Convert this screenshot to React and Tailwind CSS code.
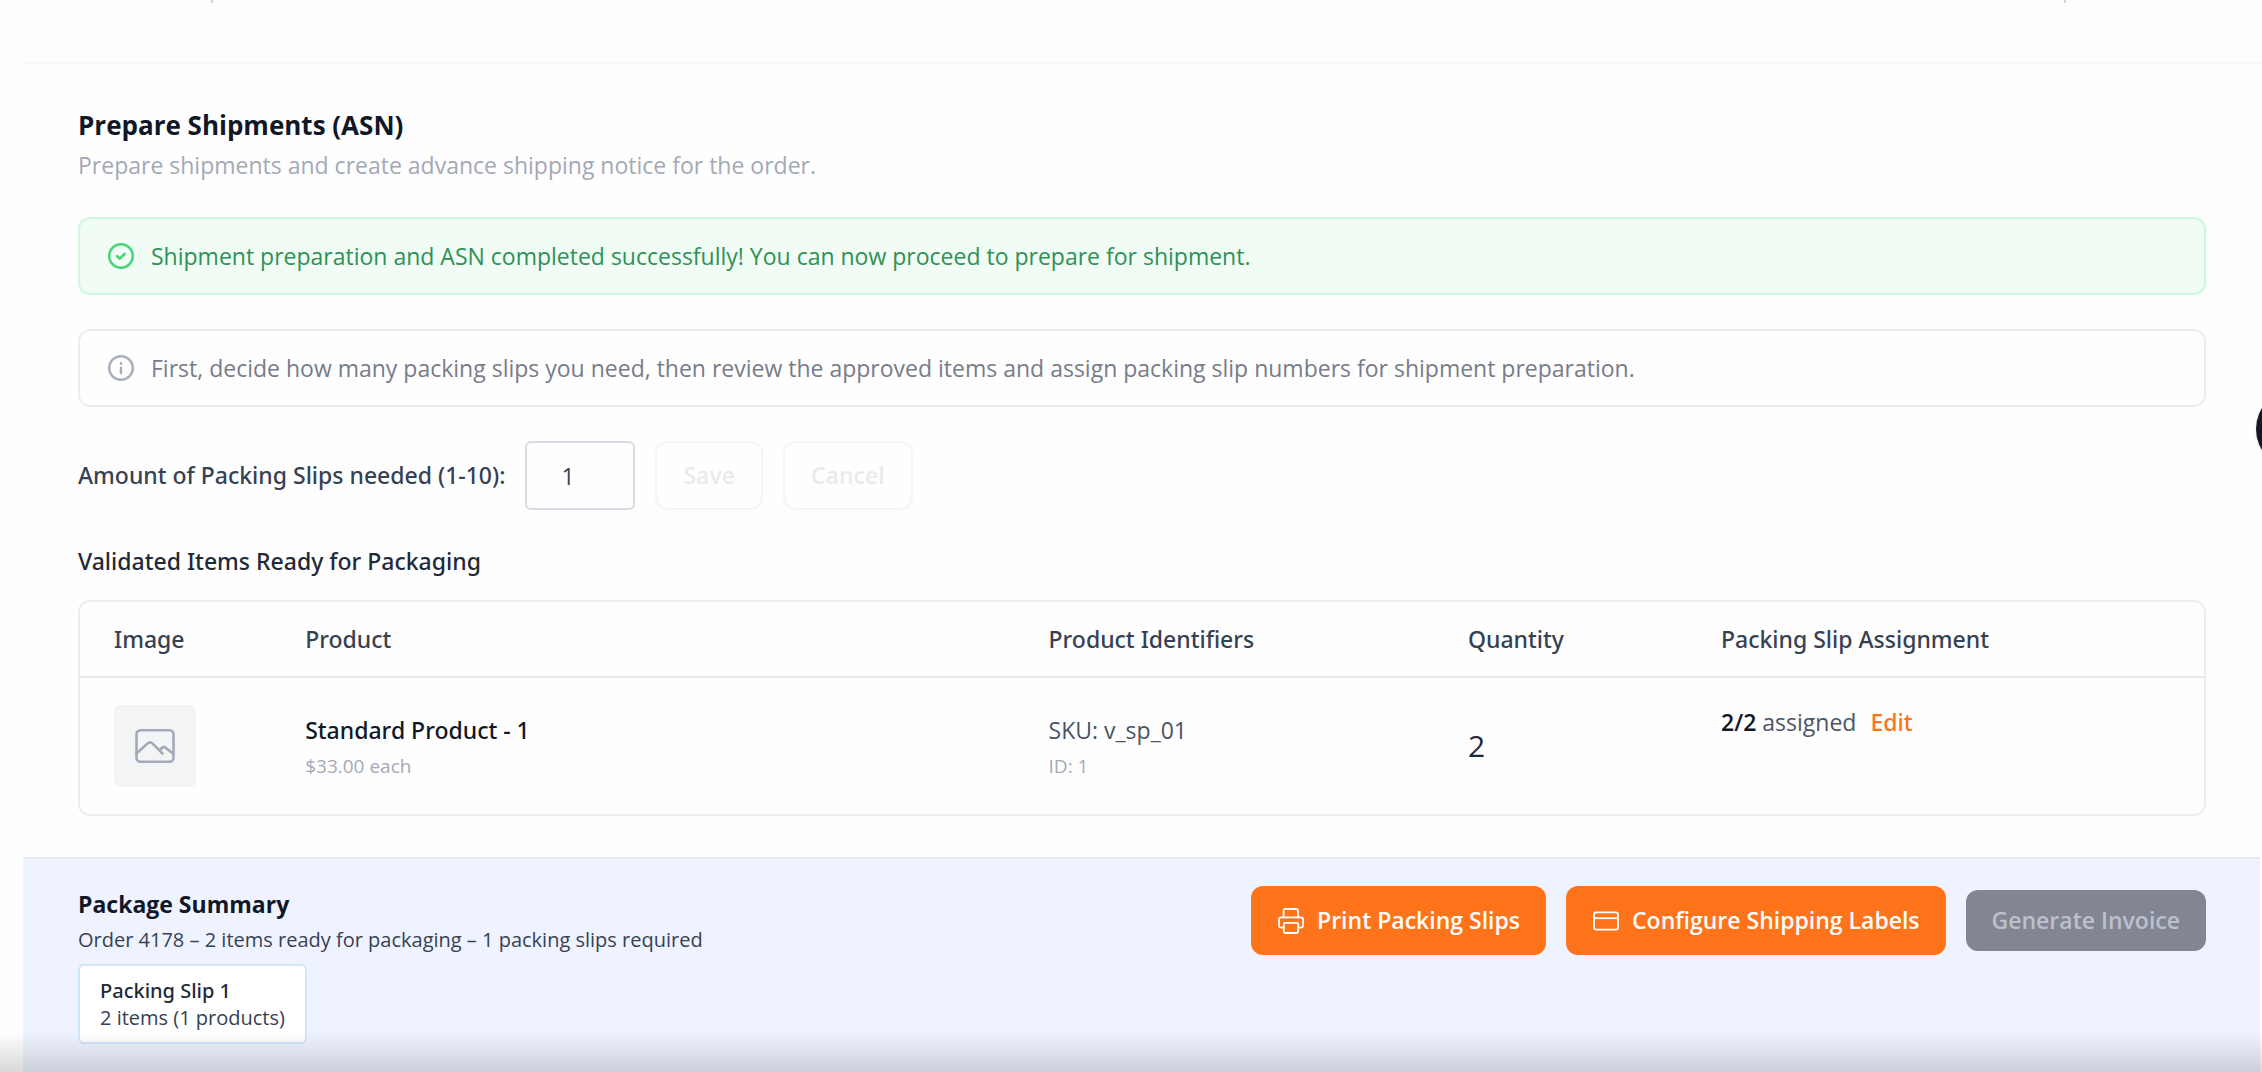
import React, { useState } from "react";

const items = [
  {
    id: 1,
    name: "Standard Product - 1",
    price: "$33.00 each",
    sku: "v_sp_01",
    quantity: 2,
    assigned: 2,
  },
];

const CheckCircleIcon = () => (
  <svg className="w-7 h-7 shrink-0 text-[#41d673]" viewBox="0 0 28 28" fill="none" stroke="currentColor" strokeWidth="2.4" aria-hidden="true">
    <circle cx="14" cy="14" r="11.8" />
    <path d="M10.2 14.2l2.6 2.4 4.8-4.8" strokeWidth="2.6" strokeLinecap="round" strokeLinejoin="round" />
  </svg>
);

const InfoCircleIcon = () => (
  <svg className="w-7 h-7 shrink-0 text-[#a9aebb]" viewBox="0 0 28 28" fill="none" stroke="currentColor" strokeWidth="2.4" aria-hidden="true">
    <circle cx="14" cy="14" r="11.8" />
    <path d="M14 13.6v5.4M14 9.2v.6" strokeWidth="2.4" strokeLinecap="round" />
  </svg>
);

const ImageIcon = () => (
  <svg className="w-10 h-9 text-[#a3a9b8]" viewBox="0 0 40 36" fill="none" stroke="currentColor" strokeWidth="2.6" strokeLinecap="round" strokeLinejoin="round" aria-hidden="true">
    <rect x="1.5" y="2.2" width="37" height="31.6" rx="4" />
    <path d="M2 25L12.6 15.4a3.5 3.5 0 0 1 4.8 0L27.5 25.5M24.8 22.4l1.8-2.2a3.5 3.5 0 0 1 4.6 0l6.8 5.4" />
  </svg>
);

const PrinterIcon = () => (
  <svg className="w-7 h-7" viewBox="0 0 28 28" fill="none" stroke="currentColor" strokeWidth="1.8" strokeLinecap="round" strokeLinejoin="round" aria-hidden="true">
    <path d="M6.6 10.4V3.4a1.4 1.4 0 0 1 1.4-1.4h11.6a1.4 1.4 0 0 1 1.4 1.4v7" />
    <path d="M6.8 20.6H4.4a2.4 2.4 0 0 1-2.4-2.4v-5.4a2.4 2.4 0 0 1 2.4-2.4h19.2a2.4 2.4 0 0 1 2.4 2.4v5.4a2.4 2.4 0 0 1-2.4 2.4h-2.4" />
    <rect x="6.8" y="15.8" width="14.4" height="10.2" rx="1.4" />
  </svg>
);

const CardIcon = () => (
  <svg className="w-7 h-7" viewBox="0 0 28 28" fill="none" stroke="currentColor" strokeWidth="1.8" strokeLinejoin="round" aria-hidden="true">
    <rect x="2" y="5.4" width="24" height="17.2" rx="2.4" />
    <path d="M2 11.2h24" />
  </svg>
);

const Notice = ({ icon, className, children }) => (
  <div className={`flex items-center gap-4 h-[78px] px-[27px] border-2 rounded-xl text-[23px] ${className}`}>
    {icon}
    <p>{children}</p>
  </div>
);

const SlipAmount = () => {
  const [amount, setAmount] = useState("1");

  return (
    <div className="flex items-center gap-5 mt-[34px]">
      <label htmlFor="slip-amount" className="font-['Noto_Sans',sans-serif] text-[23px] font-medium text-gray-700">
        Amount of Packing Slips needed (1-10):
      </label>
      <input
        id="slip-amount"
        type="text"
        inputMode="numeric"
        className="w-[110px] h-[69px] px-[34px] border-2 border-[#d8dbe3] rounded-md text-[23px] text-gray-700"
        value={amount}
        onChange={(e) => setAmount(e.target.value)}
      />
      <button type="button" disabled className="h-[69px] px-[26px] border-2 border-[#f5f5f6] rounded-xl text-[23px] font-semibold text-[#e9eaed]">
        Save
      </button>
      <button type="button" disabled className="h-[69px] px-[26px] border-2 border-[#f5f5f6] rounded-xl text-[23px] font-semibold text-[#e9eaed]">
        Cancel
      </button>
    </div>
  );
};

const ItemsTable = () => (
  <div className="mt-[19px] border-2 border-[#ededf0] rounded-xl overflow-hidden">
    <table className="w-full table-fixed text-left text-[23px]">
      <thead className="font-['Noto_Sans',sans-serif]">
        <tr className="h-[75px] border-b-2 border-[#e8e9ee] text-gray-700">
          <th className="w-[9%] px-[34px] font-medium">Image</th>
          <th className="w-[35%] px-[34px] font-medium">Product</th>
          <th className="px-[34px] font-medium">Product Identifiers</th>
          <th className="w-[253px] px-[34px] font-medium">Quantity</th>
          <th className="w-[517px] px-[34px] font-medium">Packing Slip Assignment</th>
        </tr>
      </thead>
      <tbody>
        {items.map((item) => (
          <tr key={item.id} className="h-[137px]">
            <td className="px-[34px]">
              <div className="flex items-center justify-center w-[82px] h-[82px] rounded-md bg-gray-100">
                <ImageIcon />
              </div>
            </td>
            <td className="px-[34px] pt-[3px]">
              <p className="font-['Noto_Sans',sans-serif] leading-9 font-medium text-gray-900">{item.name}</p>
              <p className="text-[19px] leading-9 text-[#a4a9b6]">{item.price}</p>
            </td>
            <td className="px-[34px] pt-[3px]">
              <p className="leading-9 text-gray-600">SKU: {item.sku}</p>
              <p className="text-[19px] leading-9 text-[#a4a9b6]">ID: {item.id}</p>
            </td>
            <td className="px-[34px] text-3xl text-gray-800">{item.quantity}</td>
            <td className="px-[34px] pt-[27px] align-top text-gray-600">
              <span className="font-semibold text-gray-900">
                {item.assigned}/{item.quantity}
              </span>{" "}
              assigned
              <button type="button" className="ml-[14px] font-['Noto_Sans',sans-serif] font-medium text-[#ff731a]">
                Edit
              </button>
            </td>
          </tr>
        ))}
      </tbody>
    </table>
  </div>
);

const PackageSummary = () => (
  <footer className="relative z-10 flex justify-between items-start flex-1 ml-[23px] mr-[2px] mt-[41px] pl-[55px] pr-[54px] pt-[27px] border-t-2 border-[#e6e9f0] bg-[#eff3ff]">
    <div>
      <h2 className="text-[23px] leading-9 font-bold text-gray-900">Package Summary</h2>
      <p className="text-xl leading-9 text-gray-700">
        Order 4178 – 2 items ready for packaging – 1 packing slips required
      </p>
      <div className="mt-[6px] w-fit px-5 py-[11px] border-2 border-[#d0e6fd] rounded-md bg-white text-xl leading-[27px]">
        <p className="font-['Noto_Sans',sans-serif] font-medium text-gray-800">Packing Slip 1</p>
        <p className="text-gray-700">2 items (1 products)</p>
      </div>
    </div>
    <div className="flex items-center gap-5 text-[23px] font-semibold">
      <button type="button" className="flex items-center gap-3 h-[69px] px-[26px] rounded-xl bg-[#ff731a] text-white">
        <PrinterIcon />
        Print Packing Slips
      </button>
      <button type="button" className="flex items-center gap-3 h-[69px] px-[26px] rounded-xl bg-[#ff731a] text-white">
        <CardIcon />
        Configure Shipping Labels
      </button>
      <button type="button" disabled className="h-[61px] px-[26px] rounded-xl bg-[#818692] text-[#bcc0cc]">
        Generate Invoice
      </button>
    </div>
  </footer>
);

const App = () => {
  return (
    <div className="relative flex flex-col min-h-screen overflow-hidden bg-[#fefefe] font-['Open_Sans','Noto_Sans',sans-serif]">
      {/* tail of the previous section */}
      <div className="flex justify-between h-[64px] ml-[23px] pl-[188px] pr-[196px] border-b-2 border-[#f7f7f8]">
        <span className="w-[2px] h-[3px] bg-gray-300" />
        <span className="w-[2px] h-[3px] bg-gray-300" />
      </div>

      <main className="pl-[78px] pr-[56px] pt-[41px]">
        <h1 className="text-[26px] leading-10 font-bold text-gray-900">Prepare Shipments (ASN)</h1>
        <p className="mb-[32px] text-[23px] leading-10 text-[#a4a9b6]">
          Prepare shipments and create advance shipping notice for the order.
        </p>

        <Notice icon={<CheckCircleIcon />} className="border-[#cdf9dc] bg-[#f0fcf4] text-[#2f9156]">
          Shipment preparation and ASN completed successfully! You can now proceed to prepare for shipment.
        </Notice>
        <Notice icon={<InfoCircleIcon />} className="mt-[34px] border-[#ededf0] text-[#777c8a]">
          First, decide how many packing slips you need, then review the approved items and assign packing slip numbers for shipment preparation.
        </Notice>

        <SlipAmount />

        <h2 className="mt-[31px] font-['Noto_Sans',sans-serif] text-[23px] leading-10 font-medium text-gray-800">
          Validated Items Ready for Packaging
        </h2>
        <ItemsTable />
      </main>

      <PackageSummary />

      {/* shade over the lower edge */}
      <div className="absolute z-20 inset-x-0 bottom-0 h-10 bg-linear-to-b from-transparent to-black/15 pointer-events-none" />

      {/* floating help button, mostly off screen */}
      <button type="button" aria-label="Help" className="absolute top-[389px] -right-[74px] w-20 h-20 rounded-full bg-[#161827] shadow-sm" />
    </div>
  );
};

export default App;
